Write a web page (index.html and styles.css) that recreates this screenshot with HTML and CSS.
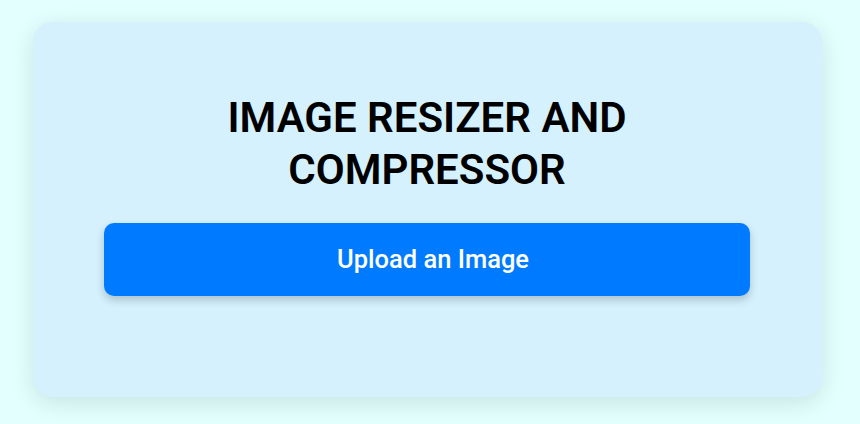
FILE: index.html
```html
<!DOCTYPE html>
<html>
<head>
<meta charset="utf-8">
<link rel="stylesheet" href="styles.css">
</head>
<body>
<main class="card">
  <h1 class="title">IMAGE RESIZER AND<br>COMPRESSOR</h1>
  <button class="upload">Upload an Image</button>
</main>
</body>
</html>
```

FILE: styles.css
```css
html, body {
  margin: 0;
  padding: 0;
}
body {
  background: #e3fffe;
  font-family: Roboto, "Liberation Sans", sans-serif;
  width: 860px;
  height: 424px;
  overflow: hidden;
  padding: 22px 0 0 33px;
  box-sizing: border-box;
}
.card {
  width: 789px;
  height: 375px;
  box-sizing: border-box;
  background: #d4f1fd;
  border-radius: 20px;
  box-shadow: 0 6px 24px rgba(0, 40, 30, 0.12);
  padding: 70px 72px 0 71px;
  display: flex;
  flex-direction: column;
  align-items: center;
}
.title {
  margin: 0 0 28px;
  font-size: 42px;
  line-height: 51.6px;
  font-weight: 600;
  text-align: center;
  color: #000;
}
.upload {
  width: 100%;
  height: 73px;
  border: none;
  border-radius: 10px;
  background: #007bff;
  color: #fff;
  font-family: Roboto, "Liberation Sans", sans-serif;
  font-size: 25.5px;
  font-weight: 500;
  padding: 0 0 2px 12px;
  box-shadow: 0 4px 8px rgba(0, 0, 0, 0.2);
}
```
